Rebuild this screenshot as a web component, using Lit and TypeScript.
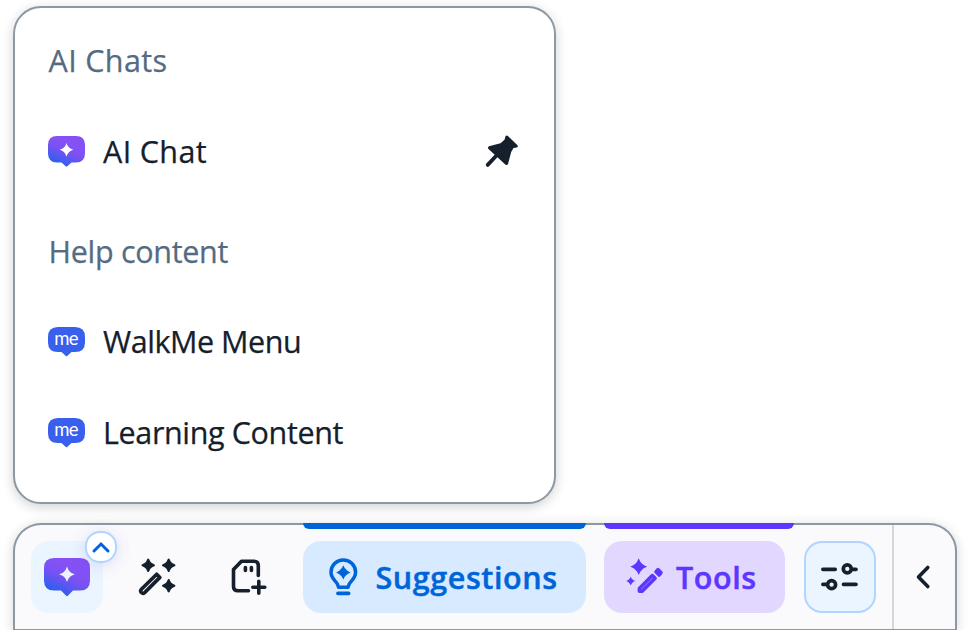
import { LitElement, html, svg, css } from "lit";
import { customElement } from "lit/decorators.js";

const star = (cx: number, cy: number, r: number, k = 0.32) => {
  const q = r * k;
  return `M${cx} ${cy - r}Q${cx + q * 0.5} ${cy - q * 1.3} ${cx + q} ${cy - q}Q${cx + q * 1.3} ${cy - q * 0.5} ${cx + r} ${cy}Q${cx + q * 1.3} ${cy + q * 0.5} ${cx + q} ${cy + q}Q${cx + q * 0.5} ${cy + q * 1.3} ${cx} ${cy + r}Q${cx - q * 0.5} ${cy + q * 1.3} ${cx - q} ${cy + q}Q${cx - q * 1.3} ${cy + q * 0.5} ${cx - r} ${cy}Q${cx - q * 1.3} ${cy - q * 0.5} ${cx - q} ${cy - q}Q${cx - q * 0.5} ${cy - q * 1.3} ${cx} ${cy - r}Z`;
};

const gradient = svg`<defs><linearGradient id="g" x1="0.68" y1="0.3" x2="0.3" y2="1">
  <stop offset="0" stop-color="#8551f5"></stop><stop offset="0.35" stop-color="#7a51f3"></stop><stop offset="1" stop-color="#1d62ee"></stop>
</linearGradient></defs>`;

const bubble = "M9 0H28Q37 0 37 9V17.500Q37 26.500 28 26.500H23.500L19.300 30.300Q18.500 31 17.700 30.300L13.500 26.500H9Q0 26.500 0 17.500V9Q0 0 9 0Z";

const chatIcon = html`<svg class="bubble" viewBox="0 0 37 31">${gradient}
  <path d=${bubble} fill="url(#g)"></path><path d=${star(18.5, 13.8, 6.8, 0.36)} fill="#fff"></path></svg>`;

const meIcon = html`<svg class="bubble" viewBox="0 0 37 30" height="30">
  <path d="M10 0H27Q37 0 37 10V15.500Q37 25 27 25H23.500L19.200 29Q18.500 29.600 17.800 29L13.500 25H10Q0 25 0 15.500V10Q0 0 10 0Z" fill="#3860ec"></path>
  <text class="me" x="6.300" y="17.600" textLength="24.300" lengthAdjust="spacing">me</text></svg>`;

const pinIcon = html`<svg class="pin" viewBox="0 0 34 34">
  <path d="M20.500 1.200Q21.800 -.2 23.200 1.200L32.200 10.100Q33.600 11.500 31.800 12.500L28.500 13.100L26.200 17L23 29.100Q22 30.700 20.300 29.500L3.500 14Q2.200 12.300 4 11.300L15.500 8.200L19.500 4.800Z" fill="#15202c"></path>
  <path d="M12 20L2.700 29.900" stroke="#15202c" stroke-width="3.800" stroke-linecap="round"></path></svg>`;

const bigChatIcon = html`<svg class="big" viewBox="0 0 46 40">${gradient}
  <path d="M10 0H36Q46 0 46 10V22.500Q46 32.500 36 32.500H29L23.800 37.800Q23 38.600 22.200 37.800L17 32.500H10Q0 32.500 0 22.500V10Q0 0 10 0Z" fill="url(#g)"></path>
  <path d=${star(23, 16.2, 7.8, 0.36)} fill="#ebf5ff"></path></svg>`;

const wandIcon = html`<svg class="tool" viewBox="0 0 72 72">
  <g fill="#15202c" stroke="#15202c" stroke-width="2.200" stroke-linejoin="round">
    <path d=${star(26.2, 24.3, 5.6, 0.38)}></path><path d=${star(46.7, 24.3, 5.6, 0.38)}></path><path d=${star(46.7, 44.7, 5.6, 0.38)}></path></g>
  <path d="M34.700 33.200L37.900 36.400L22.600 51.600Q21 53 19.300 51.500Q17.900 49.800 19.400 48.200Z" fill="none" stroke="#15202c" stroke-width="3.600" stroke-linejoin="round"></path></svg>`;

const cardIcon = html`<svg class="tool" viewBox="0 0 72 72">
  <g fill="none" stroke="#15202c" stroke-width="3.600" stroke-linecap="round" stroke-linejoin="round">
    <path d="M35.500 49.700H25Q20.500 49.700 20.500 45.500V28.500L28.500 20.300H41Q45.300 20.300 45.300 24.500V34.500"></path>
    <path d="M32.400 26.500V29.500M38.400 26.500V29.500M45.800 40.300V52.300M39.800 46.300H51.800"></path></g></svg>`;

const bulbIcon = html`<svg class="lead" viewBox="0 0 30 38">
  <path d="M10.600 29.300L9.400 26C8 23 3 20.500 3 14.300A12.300 12.300 0 0 1 27.600 14.300C27.600 20.500 22.600 23 21.200 26L20 29.300Z" fill="none" stroke="#0064d9" stroke-width="3.500" stroke-linejoin="round"></path>
  <path d="M9.900 35.400H20.700" stroke="#0064d9" stroke-width="3.600" stroke-linecap="round"></path>
  <path d=${star(15.3, 14.4, 7.2, 0.4)} fill="#0064d9"></path></svg>`;

const penIcon = html`<svg class="pen" viewBox="0 0 38 38">
  <g fill="#5d36ff"><path d=${star(12.7, 8.7, 8.4, 0.38)}></path><path d=${star(4.7, 23, 4.6, 0.38)}></path></g>
  <path d="M26.300 17.600L29.100 20.300L16.100 33.300H13.400V30.500Z" fill="none" stroke="#5d36ff" stroke-width="3.600" stroke-linejoin="round"></path>
  <path d="M32 11.400L35.200 14.700L33.100 17.200L29.800 13.800Z" fill="#5d36ff" stroke="#5d36ff" stroke-width="3.200" stroke-linejoin="round"></path></svg>`;

const slidersIcon = html`<svg class="glyph" viewBox="0 0 72 72">
  <g fill="none" stroke="#15202c" stroke-width="3.700" stroke-linecap="round">
    <path d="M18.900 28.300H31.200M49 28.300H52M18.900 43.300H22M39.500 43.300H52"></path>
    <circle cx="43.300" cy="27.900" r="4"></circle><circle cx="27.600" cy="43.700" r="4"></circle></g></svg>`;

@customElement("app-root")
export class AppRoot extends LitElement {
  static styles = css`
    :host { display: block; width: 970px; height: 630px; overflow: hidden; background: #fff; font-family: "Open Sans", sans-serif; color: #15202c; padding: 6px 0 0 13px; box-sizing: border-box; }
    * { box-sizing: border-box; }
    svg { display: block; flex: none; overflow: visible; }
    .menu { width: 543px; height: 498px; border: 2px solid #8d98a5; border-radius: 28px; background: #fff; box-shadow: 0 3px 12px rgba(20, 25, 30, 0.2); padding: 8px 35px 0 33.5px; }
    .heading, .row { height: 91px; display: flex; align-items: center; font-size: 30.5px; line-height: 42px; white-space: nowrap; -webkit-text-stroke: 0.25px currentColor; }
    .heading { color: #556b82; height: 90px; }
    .heading.second { height: 99px; padding-top: 10px; }
    .row { gap: 18px; }
    .bubble { width: 37px; margin-left: -0.5px; }
    .me { font: 400 18.500px "Lato", sans-serif; fill: #fff; -webkit-text-stroke: 0; }
    .pin { width: 34px; height: 34px; margin-left: auto; }
    .t { display: block; padding-bottom: 2px; letter-spacing: 0.35px; }
    .second .t { letter-spacing: -0.3px; }
    .t.walk { letter-spacing: -0.47px; }
    .t.learn { letter-spacing: -0.37px; }
    .bar { margin-top: 19px; width: 944px; height: 107px; border: 2px solid #8d98a5; border-bottom-width: 1px; border-radius: 28px 28px 0 0; background: #fafafd; box-shadow: 0 2px 12px rgba(20, 25, 30, 0.18); display: flex; padding: 16px 0 0 16px; }
    .btn { position: relative; height: 72px; border-radius: 18px; display: flex; align-items: center; flex: none; font-weight: 600; font-size: 30.5px; white-space: nowrap; -webkit-text-stroke: 0.45px currentColor; }
    .btn .t { padding: 0; letter-spacing: 0.58px; }
    .chat { width: 72px; background: #ebf5ff; justify-content: center; padding-top: 2px; }
    .big { width: 46px; height: 40px; }
    .badge { position: absolute; left: 54px; top: -10px; width: 32px; height: 32px; border: 2px solid #b0d5ff; border-radius: 15px; background: #fff; display: grid; place-items: center; box-shadow: 0 2px 16px rgba(80, 70, 180, 0.17); }
    .badge svg { width: 18px; height: 12px; }
    .tool { width: 72px; height: 72px; margin-left: 19px; }
    .suggest { width: 283px; background: #d8eaff; color: #0064d9; margin-left: 18px; padding-left: 25px; gap: 17.5px; }
    .tools { width: 181px; background: #e2d8ff; color: #5d36ff; margin-left: 18px; padding-left: 22px; gap: 12px; }
    .lead { width: 30px; height: 38px; }
    .pen { width: 38px; height: 38px; }
    .tab { position: absolute; left: 0; top: -18px; height: 6px; width: 100%; border-radius: 0 0 6px 6px; background: #0064d9; }
    .tab.violet { width: 190px; background: #5d36ff; }
    .settings { width: 72px; border: 2px solid #b0d5ff; background: #ebf5ff; margin-left: 19px; justify-content: center; }
    .glyph { width: 72px; height: 72px; }
    .end { flex: 1; margin: -16px 0 0 16px; border-left: 2px solid #d5d7da; display: flex; justify-content: center; padding: 39px 3px 0 0; }
    .end svg { width: 16px; height: 26px; }
  `;

  render() {
    return html`
      <section class="menu">
        <div class="heading"><span class="t">AI Chats</span></div>
        <div class="row">${chatIcon}<span class="t">AI Chat</span>${pinIcon}</div>
        <div class="heading second"><span class="t">Help content</span></div>
        <div class="row">${meIcon}<span class="t walk">WalkMe Menu</span></div>
        <div class="row">${meIcon}<span class="t learn">Learning Content</span></div>
      </section>
      <nav class="bar">
        <div class="btn chat">${bigChatIcon}
          <span class="badge"><svg viewBox="0 0 18 12"><path d="M2 10L9 3L16 10" fill="none" stroke="#0064d9" stroke-width="3" stroke-linecap="round"></path></svg></span>
        </div>
        ${wandIcon}${cardIcon}
        <div class="btn suggest"><i class="tab"></i>${bulbIcon}<span class="t">Suggestions</span></div>
        <div class="btn tools"><i class="tab violet"></i>${penIcon}<span class="t">Tools</span></div>
        <div class="btn settings">${slidersIcon}</div>
        <div class="end"><svg viewBox="0 0 16 26"><path d="M12.800 3.500L3.500 13L12.800 22.500" fill="none" stroke="#15202c" stroke-width="3.600" stroke-linecap="round" stroke-linejoin="round"></path></svg></div>
      </nav>`;
  }
}
